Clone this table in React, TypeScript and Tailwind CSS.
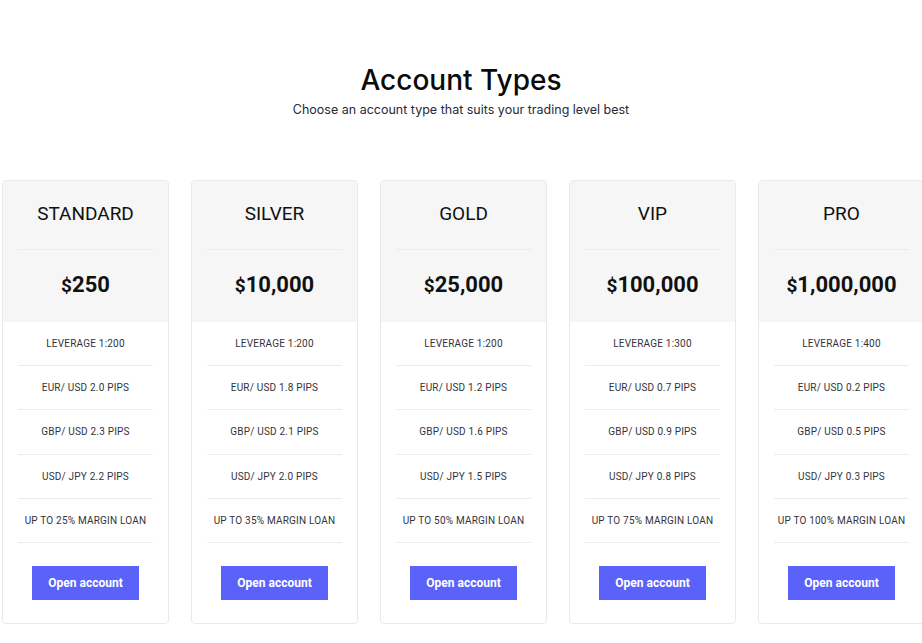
import React from "react";

interface Plan {
  name: string;
  price: string;
  features: string[];
}

const plans: Plan[] = [
  {
    name: "STANDARD",
    price: "250",
    features: [
      "LEVERAGE 1:200",
      "EUR/ USD 2.0 PIPS",
      "GBP/ USD 2.3 PIPS",
      "USD/ JPY 2.2 PIPS",
      "UP TO 25% MARGIN LOAN",
    ],
  },
  {
    name: "SILVER",
    price: "10,000",
    features: [
      "LEVERAGE 1:200",
      "EUR/ USD 1.8 PIPS",
      "GBP/ USD 2.1 PIPS",
      "USD/ JPY 2.0 PIPS",
      "UP TO 35% MARGIN LOAN",
    ],
  },
  {
    name: "GOLD",
    price: "25,000",
    features: [
      "LEVERAGE 1:200",
      "EUR/ USD 1.2 PIPS",
      "GBP/ USD 1.6 PIPS",
      "USD/ JPY 1.5 PIPS",
      "UP TO 50% MARGIN LOAN",
    ],
  },
  {
    name: "VIP",
    price: "100,000",
    features: [
      "LEVERAGE 1:300",
      "EUR/ USD 0.7 PIPS",
      "GBP/ USD 0.9 PIPS",
      "USD/ JPY 0.8 PIPS",
      "UP TO 75% MARGIN LOAN",
    ],
  },
  {
    name: "PRO",
    price: "1,000,000",
    features: [
      "LEVERAGE 1:400",
      "EUR/ USD 0.2 PIPS",
      "GBP/ USD 0.5 PIPS",
      "USD/ JPY 0.3 PIPS",
      "UP TO 100% MARGIN LOAN",
    ],
  },
];

const PlanCard: React.FC<{ plan: Plan }> = ({ plan }) => (
  <div className="w-[167px] shrink-0 rounded-[4px] border border-[#e9e9e9] bg-white overflow-hidden">
    <div className="bg-[#f6f6f6] px-[15px] pt-[21px] pb-[21px] text-center">
      <div className="text-[19px] leading-[24px] text-[#111] font-normal">{plan.name}</div>
      <div className="mt-[23px] border-t border-[#ebebeb]" />
      <div className="mt-[20px] text-[22px] leading-[30px] font-bold text-[#111]">
        <span className="text-[19px]">$</span>
        {plan.price}
      </div>
    </div>
    <ul className="px-[15px]">
      {plan.features.map((f) => (
        <li
          key={f}
          className="h-[44.2px] flex items-center justify-center border-b border-[#ececec] text-[10px] tracking-[0.2px] text-[#33333b]"
        >
          {f}
        </li>
      ))}
    </ul>
    <div className="flex justify-center pt-[23px] pb-[23px]">
      <button className="w-[107px] h-[34px] bg-[#5a62fa] text-white text-[12px] font-bold">
        Open account
      </button>
    </div>
  </div>
);

export default function App() {
  return (
    <div className="w-[922px] h-[643px] bg-white overflow-hidden font-['Roboto',sans-serif]">
      <div className="pt-[62px] text-center">
        <h1 className="font-['Inter',sans-serif] font-medium text-[28px] leading-[36px] text-[#0b0b0b]">
          Account Types
        </h1>
        <p className="mt-[2px] font-['Inter',sans-serif] text-[12.5px] leading-[20px] text-[#2a2a3a]">
          Choose an account type that suits your trading level best
        </p>
      </div>
      <div className="mt-[60px] pl-[2px] flex gap-[22px]">
        {plans.map((p) => (
          <PlanCard key={p.name} plan={p} />
        ))}
      </div>
    </div>
  );
}
